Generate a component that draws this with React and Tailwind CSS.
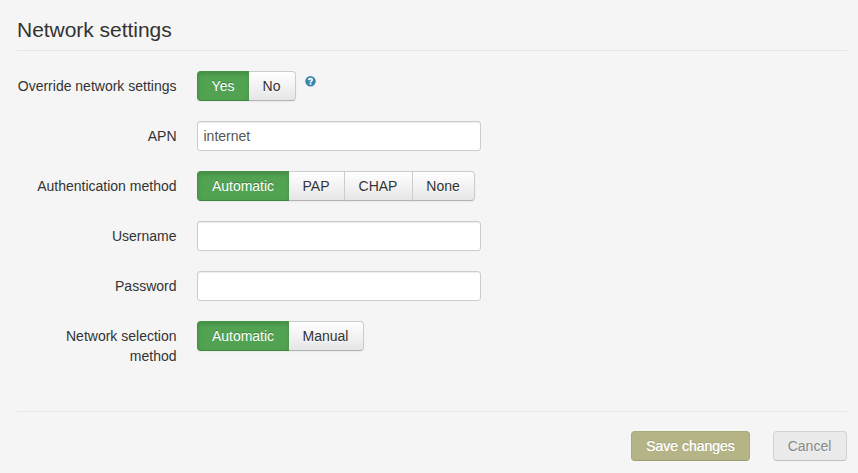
import React from "react";

function ButtonGroup({ items }) {
  return (
    <div className="flex rounded shadow-[0_1px_2px_rgba(0,0,0,0.05)]">
      {items.map(([label, width], i) => (
        <button
          key={label}
          type="button"
          className={`h-[30px] ${width} border pr-px text-center leading-5 first:rounded-l last:rounded-r ${
            i === 0
              ? "border-r-0 border-[#459145] border-b-[#3d863d] bg-[#51a351] text-white shadow-[inset_0_2px_4px_rgba(0,0,0,0.15)] [text-shadow:0_-1px_0_rgba(0,0,0,0.25)]"
              : "border-l-0 border-[#cccccc] border-b-[#b3b3b3] bg-linear-to-b from-white to-[#e6e6e6] text-[#333333] [text-shadow:0_1px_1px_rgba(255,255,255,0.75)]"
          }`}
        >
          {label}
        </button>
      ))}
    </div>
  );
}

function Row({ label, children }) {
  return (
    <div className="mb-5 flex items-start">
      <label className="w-[160px] shrink-0 pr-[0.5px] pt-[5px] text-right">{label}</label>
      <div className="ml-5 flex h-[30px] items-start">{children}</div>
    </div>
  );
}

function Field({ type = "text", value = "", label }) {
  return (
    <input
      type={type}
      aria-label={label}
      defaultValue={value}
      className="h-[30px] w-[284px] rounded-[3px] border border-[#cccccc] bg-white px-[5.5px] py-1 leading-5 text-[#555555] shadow-[inset_0_1px_1px_rgba(0,0,0,0.075)] outline-none"
    />
  );
}

export default function App() {
  return (
    <div className="h-[473px] w-[858px] overflow-hidden bg-[#f5f5f5] pl-[17px] pr-[11px] pt-[10px] font-['Liberation_Sans',Arial,sans-serif] text-sm leading-5 text-[#333333]">
      <h1 className="mb-5 h-[41px] border-b border-[#e5e5e5] text-[21px] leading-10 tracking-[-0.03px]">Network settings</h1>
      <Row label="Override network settings">
        <ButtonGroup items={[["Yes", "w-[52px]"], ["No", "w-[47px]"]]} />
        <svg className="ml-[9px] mt-[5px] size-[11px]" viewBox="0 0 11 11" aria-hidden="true">
          <circle cx="5.5" cy="5.3" r="5.2" fill="#3a87ad" />
          <path d="M3.7 4.1C3.9 2.1 7.3 2.1 7.2 4C7.1 5.1 5.5 5.1 5.5 6.4" fill="none" stroke="#fff" strokeWidth="1.7" />
          <rect x="4.6" y="7" width="1.8" height="1.6" fill="#fff" />
        </svg>
      </Row>
      <Row label="APN">
        <Field label="APN" value="internet" />
      </Row>
      <Row label="Authentication method">
        <ButtonGroup items={[["Automatic", "w-[92px]"], ["PAP", "w-[56px]"], ["CHAP", "w-[68px]"], ["None", "w-[62px]"]]} />
      </Row>
      <Row label="Username">
        <Field label="Username" />
      </Row>
      <Row label="Password">
        <Field label="Password" type="password" />
      </Row>
      <Row label="Network selection method">
        <ButtonGroup items={[["Automatic", "w-[92px]"], ["Manual", "w-[75px]"]]} />
      </Row>
      <div className="mt-[45px] flex justify-end gap-[23px] border-t border-[#e5e5e5] pt-[19px]">
        <button type="button" className="h-[30px] w-[119px] rounded border border-[#a5ab7b] border-b-[#999f70] bg-[#b5b487] leading-5 text-white [text-shadow:0_-1px_0_rgba(0,0,0,0.12),0_0_0.5px_#fff]">
          Save changes
        </button>
        <button type="button" className="h-[30px] w-[74px] rounded border border-[#d2d2d2] border-b-[#c1c1c1] bg-[#eaeaea] pr-px leading-5 text-[#888888] [text-shadow:0_1px_1px_rgba(255,255,255,0.5)]">
          Cancel
        </button>
      </div>
    </div>
  );
}
